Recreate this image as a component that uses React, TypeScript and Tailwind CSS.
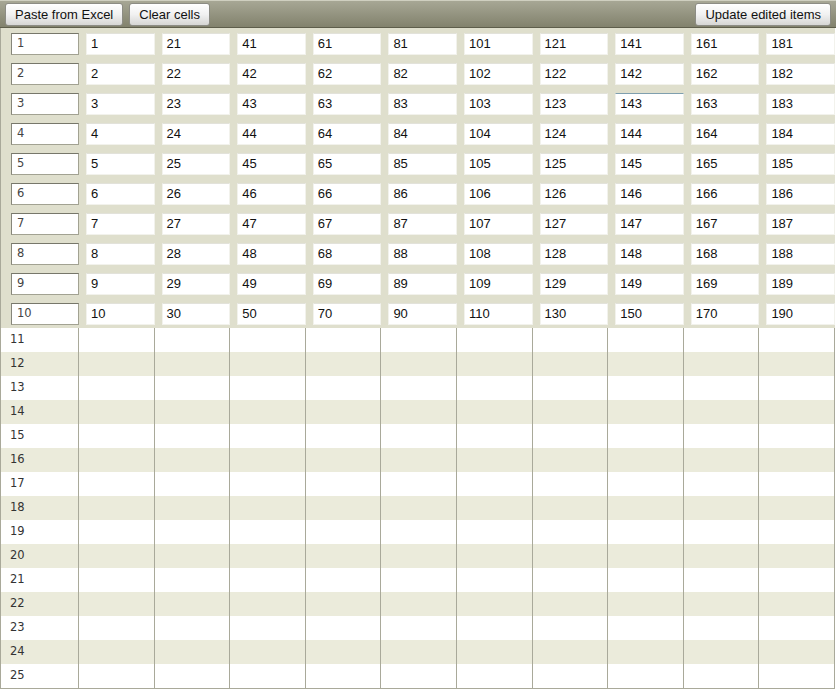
const dataCols = Array.from({ length: 10 }, (_, i) => i);
const inputRows = Array.from({ length: 10 }, (_, i) => i + 1);
const emptyRows = Array.from({ length: 15 }, (_, i) => i + 11);

function ToolButton({ label }: { label: string }) {
  return (
    <button
      type="button"
      className="h-[23px] px-[9px] rounded-[3px] border border-[#8c8c84] bg-gradient-to-b from-[#ffffff] via-[#f1f1f1] to-[#d6d6d4] text-[13px] leading-none text-[#111] shadow-[inset_0_1px_0_#fff]"
    >
      {label}
    </button>
  );
}

export default function App() {
  return (
    <div
      className="w-[836px] h-[691px] bg-white overflow-hidden"
      style={{ fontFamily: '"Liberation Sans", Arial, sans-serif' }}
    >
      {/* Toolbar */}
      <div className="h-[28px] flex items-center px-[5px] gap-[6px] border-t border-t-[#cfcfc0] border-b border-b-[#5e5e4b] bg-gradient-to-b from-[#a7a795] to-[#82826d]">
        <ToolButton label="Paste from Excel" />
        <ToolButton label="Clear cells" />
        <div className="flex-1" />
        <ToolButton label="Update edited items" />
      </div>

      {/* Grid */}
      <div className="w-[835px] border-l border-b border-[#a9a99a]">
        {inputRows.map((r) => (
          <div
            key={r}
            className="grid grid-cols-[78px_repeat(10,minmax(0,1fr))] h-[30px] bg-[#dfdfcd]"
          >
            <div className="pl-[10px] pt-[5px]">
              <div
                className="h-[22px] w-full bg-white border border-[#a2a292] border-t-[#77776a] border-l-[#86867a] pl-[5px] flex items-center text-[11.5px] text-[#444]"
                style={{ fontFamily: '"DejaVu Sans", Tahoma, sans-serif' }}
              >
                {r}
              </div>
            </div>
            {dataCols.map((c) => (
              <div key={c} className="pl-[7px] pt-[5px]">
                <div
                  className={
                    r === 3 && c === 7
                      ? "h-[22px] w-full bg-white border border-[#f0f0ea] border-t-[#7f9fae] pl-[4px] flex items-center text-[13px] text-[#111]"
                      : "h-[22px] w-full bg-white border border-[#f2f2ec] border-t-[#e2e2da] pl-[4px] flex items-center text-[13px] text-[#111]"
                  }
                >
                  {r + c * 20}
                </div>
              </div>
            ))}
          </div>
        ))}

        {emptyRows.map((r) => (
          <div
            key={r}
            className={
              r % 2 === 0
                ? "grid grid-cols-[78px_repeat(10,minmax(0,1fr))] h-[24px] bg-[#ebebdb]"
                : "grid grid-cols-[78px_repeat(10,minmax(0,1fr))] h-[24px] bg-white"
            }
          >
            <div
              className="border-r border-[#a9a99a] pl-[9px] flex items-center text-[11.5px] text-[#333]"
              style={{ fontFamily: '"DejaVu Sans", Tahoma, sans-serif' }}
            >
              {r}
            </div>
            {dataCols.map((c) => (
              <div key={c} className="border-r border-[#a9a99a]" />
            ))}
          </div>
        ))}
      </div>
    </div>
  );
}
